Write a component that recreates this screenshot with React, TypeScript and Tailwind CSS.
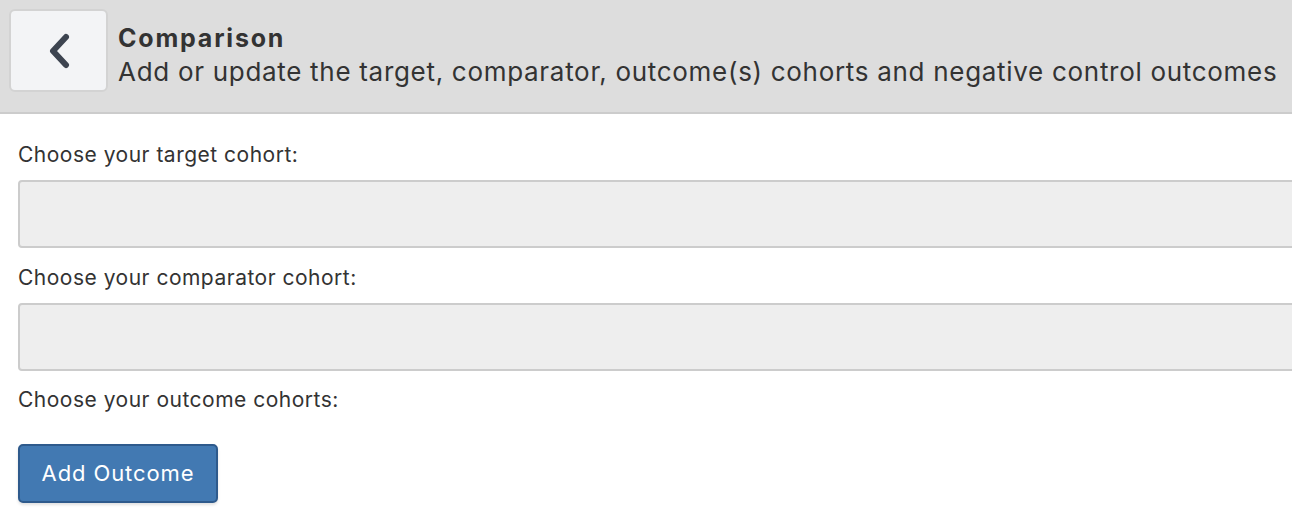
import React from "react";

const Field = ({ label }: { label: string }) => (
  <>
    <label className="block h-[24px] text-[21px] leading-[24px] tracking-[0.5px] text-[#333]">{label}</label>
    <div className="mt-[13px] mb-[18px] h-[68px] w-[1320px] rounded-[4px] border-2 border-[#cccccc] bg-[#eeeeee]"></div>
  </>
);

const App = () => {
  return (
    <div className="h-[532px] w-[1292px] overflow-hidden bg-white font-['Inter','Liberation_Sans',sans-serif] text-[#333]">
      {/* Header */}
      <div className="flex h-[114px] items-start border-b-2 border-[#cccccc] bg-[#dddddd] pl-[9px] pt-[9px]">
        <button className="flex h-[83px] w-[99px] shrink-0 items-center justify-center rounded-[6px] border-2 border-[#d3d3d3] bg-[#f3f4f6]">
          <svg width="24" height="36" viewBox="0 0 24 36" fill="none">
            <path d="M19 4 L6 18 L19 32" stroke="#3d4450" strokeWidth="6" strokeLinecap="round" strokeLinejoin="round" />
          </svg>
        </button>
        <div className="ml-[10px] mt-[14px] whitespace-nowrap">
          <h1 className="text-[25px] font-bold leading-[30px] tracking-[1.8px]">Comparison</h1>
          <p className="mt-[2px] text-[26px] leading-[34px] tracking-[0.7px]">
            Add or update the target, comparator, outcome(s) cohorts and negative control outcomes
          </p>
        </div>
      </div>

      {/* Body */}
      <div className="px-[18px] pt-[29px]">
        <Field label="Choose your target cohort:" />
        <Field label="Choose your comparator cohort:" />
        <label className="-mt-[1px] block h-[24px] text-[21px] leading-[24px] tracking-[0.5px] text-[#333]">Choose your outcome cohorts:</label>
        <button className="mt-[32px] h-[59px] w-[200px] rounded-[5px] border-2 border-[#2e5a8c] bg-[#4279b2] text-[22px] tracking-[0.9px] text-white shadow-[0_2px_3px_rgba(0,0,0,0.12)]">
          Add Outcome
        </button>
      </div>
    </div>
  );
};

export default App;
